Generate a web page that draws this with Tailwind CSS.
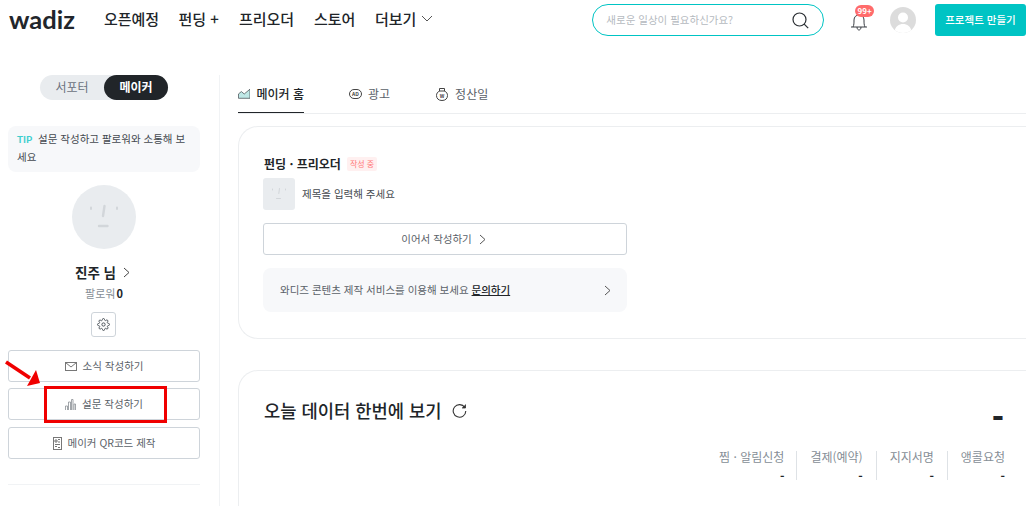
<!DOCTYPE html>
<html lang="ko">
<head>
    <meta charset="UTF-8">
    <meta name="viewport" content="width=device-width, initial-scale=1.0">
    <title>wadiz 메이커 홈</title>
    <script src="https://cdn.jsdelivr.net/npm/@tailwindcss/browser@4"></script>
</head>
<body class="relative h-[506px] w-[1026px] overflow-hidden bg-white font-['Noto_Sans_CJK_KR','Noto_Sans',sans-serif] text-[#212529]">
    <!-- Header -->
    <header class="flex h-[40px] items-start">
        <span class="ml-[9px] mt-[3px] w-[69px] font-['Lato',sans-serif] text-[25.5px] leading-[32px] font-bold text-[#22262b]">wadiz</span>
        <nav class="ml-[26px] mt-[6px] flex items-center whitespace-nowrap text-[15px] leading-[26px] font-medium">
            <span class="w-[74.5px]">오픈예정</span>
            <span class="w-[60.5px]">펀딩 +</span>
            <span class="w-[75px]">프리오더</span>
            <span class="w-[61px]">스토어</span>
            <span>더보기</span>
            <svg class="ml-[5px]" width="12" height="8" viewBox="0 0 12 8" fill="none" stroke="#555" stroke-width="1"><path d="M1 1l5 5 5-5"/></svg>
        </nav>
        <div class="ml-[159px] mt-[4px] flex h-[32px] w-[232px] items-center justify-between rounded-full border border-[#00c4c4] pl-[13px] pr-[14px]">
            <span class="text-[10.5px] text-[#b5bac0]">새로운 일상이 필요하신가요?</span>
            <svg width="17" height="17" viewBox="0 0 17 17" fill="none" stroke="#2a2e33" stroke-width="1.2"><circle cx="7.5" cy="7.5" r="6.5"/><path d="M12.2 12.2l4 4"/></svg>
        </div>
        <div class="relative ml-[26px] mt-[4px] h-[32px] w-[20px]">
            <svg class="absolute left-0 top-[8px]" width="18" height="19" viewBox="0 0 18 19" fill="none" stroke="#3a3e44" stroke-width="1"><path d="M1 15h16M3 15c1-2 1-4 1-7 0-3 2-5 5-5s5 2 5 5c0 3 0 5 1 7M7 15c0 2 1 3 2 3s2-1 2-3"/></svg>
            <span class="absolute left-[5px] top-[1px] h-[12px] w-[19px] rounded-full bg-[#ff6b6b] text-center text-[8px] leading-[12px] font-bold text-white">99+</span>
        </div>
        <div class="ml-[20px] mt-[7px] h-[26px] w-[26px] overflow-hidden rounded-full bg-[#dcdcdc]">
            <svg width="26" height="26" viewBox="0 0 26 26" fill="#fff"><circle cx="13" cy="10.5" r="5"/><path d="M4 26c1-7 5-9 9-9s8 2 9 9z"/></svg>
        </div>
        <a class="ml-[19px] mt-[4px] flex h-[32px] w-[91px] shrink-0 items-center justify-center rounded-[3px] bg-[#00c4c4] text-[10.5px] font-medium text-white">프로젝트 만들기</a>
    </header>

    <div class="flex">
        <!-- Sidebar -->
        <aside class="ml-[8px] flex w-[192px] shrink-0 flex-col pt-[35px]">
            <div class="mx-auto flex h-[25px] w-[128px] rounded-full bg-[#e9ecef] text-[12px] leading-[24px]">
                <span class="w-[64px] text-center text-[#6b7280]">서포터</span>
                <span class="w-[64px] rounded-full bg-[#212529] text-center font-bold text-white">메이커</span>
            </div>
            <p class="mt-[26px] h-[46px] break-all rounded-[8px] bg-[#f7f8fa] py-[4px] pl-[9px] pr-[9px] text-[10.5px] leading-[18px] text-[#44494f]"><span class="mr-[3px] font-['Lato',sans-serif] text-[10px] leading-none font-bold text-[#3ecfcf]">TIP</span> 설문 작성하고 팔로워와 소통해 보세요</p>
            <div class="mx-auto mt-[13px] h-[64px] w-[64px] rounded-full bg-[#e9ecef]">
                <svg width="64" height="64" viewBox="0 0 64 64" fill="none" stroke="#d2d6da" stroke-width="2" stroke-linecap="round"><path d="M19 22.5v1.5M45 22.5v1.5"/><path d="M32.5 21l-1.500 10" stroke-width="2.400"/><path d="M27 41h8.500" stroke-width="2.400"/></svg>
            </div>
            <div class="mt-[12px] flex items-center justify-center pr-[3px] text-[13.5px] leading-[22px] font-bold">진주 님
                <svg class="ml-[7px]" width="7" height="11" viewBox="0 0 7 11" fill="none" stroke="#444" stroke-width="1"><path d="M1 1l5 4.500-5 4.500"/></svg>
            </div>
            <p class="text-center text-[11px] leading-[20px] text-[#868e96]">팔로워 <span class="-ml-[2px] font-bold text-[#212529]">0</span></p>
            <button class="ml-[83px] mt-[9px] flex h-[25px] w-[25px] items-center justify-center rounded-[3px] border border-[#ced4da]">
                <svg width="13" height="13" viewBox="0 0 24 24" fill="none" stroke="#495057" stroke-width="1.800"><circle cx="12" cy="12" r="3"/><path d="M19.400 15a1.650 1.650 0 0 0 .33 1.820l.06.06a2 2 0 1 1-2.830 2.830l-.06-.06a1.650 1.650 0 0 0-2.820 1.170V21a2 2 0 1 1-4 0v-.09a1.650 1.650 0 0 0-2.820-1.170l-.06.06a2 2 0 1 1-2.830-2.830l.06-.06a1.650 1.650 0 0 0-1.170-2.820H3a2 2 0 1 1 0-4h.09a1.650 1.650 0 0 0 1.170-2.820l-.06-.06a2 2 0 1 1 2.830-2.830l.06.06a1.650 1.650 0 0 0 2.820-1.170V3a2 2 0 1 1 4 0v.09a1.650 1.650 0 0 0 2.820 1.170l.06-.06a2 2 0 1 1 2.830 2.830l-.06.06a1.650 1.650 0 0 0 1.170 2.820H21a2 2 0 1 1 0 4h-.09a1.650 1.650 0 0 0-1.510 1.090z"/></svg>
            </button>
            <div class="mt-[13px] flex flex-col gap-[6px] text-[10.5px] text-[#5a6168]">
                <button class="flex h-[32px] items-center justify-center gap-[6px] rounded-[3px] border border-[#ced4da]">
                    <svg width="12" height="9" viewBox="0 0 12 9" fill="none" stroke="#777" stroke-width="1"><rect x=".5" y=".5" width="11" height="8"/><path d="M.5 .5L6 5l5.500-4.500"/></svg>소식 작성하기
                </button>
                <button class="flex h-[32px] items-center justify-center gap-[6px] rounded-[3px] border border-[#ced4da]">
                    <svg width="11" height="11" viewBox="0 0 11 11" fill="none" stroke="#8a8f94" stroke-width=".8"><path d="M.5 11V7h2v4M3.500 11V3h2v8M6.500 11V.5h1.500V11M9 11V5h1.500v6"/></svg>설문 작성하기
                </button>
                <button class="mt-[1px] flex h-[32px] items-center justify-center gap-[6px] rounded-[3px] border border-[#ced4da]">
                    <svg width="9" height="13" viewBox="0 0 9 13" fill="none" stroke="#777"><rect x=".5" y=".5" width="8" height="12"/><path d="M2 3h2v2H2zM5 2.500h2M5 5h2M2 7.500h5M2 9.500h2M5 10.500h2" stroke-width="1"/></svg>메이커 QR코드 제작
                </button>
            </div>
            <div class="mt-[25px] h-px bg-[#f1f3f5]"></div>
        </aside>

        <div class="ml-[19px] mt-[35px] h-[431px] w-px bg-[#f1f3f5]"></div>

        <!-- Main -->
        <main class="ml-[18px] mt-[35px] w-[788px] shrink-0">
            <nav class="flex h-[39px] border-b border-[#eceef0] whitespace-nowrap text-[12px] leading-[36px]">
                <a class="flex h-[38px] w-[66px] items-center gap-[6px] border-b border-[#212529] font-medium">
                    <svg width="13" height="11" viewBox="0 0 13 11" fill="none"><path d="M.5 10.500V6l3-2.500L6.500 6l6-5v9.500z" fill="#bfe8e6" stroke="#4b5258" stroke-width=".8"/></svg>메이커 홈
                </a>
                <a class="ml-[45px] flex h-[38px] items-center gap-[6px] text-[#5a6168]">
                    <svg width="13" height="10" viewBox="0 0 13 10"><rect x=".5" y=".5" width="12" height="9" rx="4.500" fill="none" stroke="#444"/><text x="6.500" y="7" font-size="5" font-weight="700" text-anchor="middle" fill="#444">AD</text></svg>광고
                </a>
                <a class="ml-[46px] flex h-[38px] items-center gap-[7px] text-[#5a6168]">
                    <svg width="12" height="13" viewBox="0 0 12 13"><path d="M3.500 .5h5v2.500c2 1 3 2.500 3 4.500 0 3-2 5-5.500 5S.5 10.500 .5 7.500c0-2 1-3.500 3-4.500z" fill="none" stroke="#444"/><path d="M3 3h6" stroke="#444"/><text x="6" y="9.500" font-size="5" font-weight="700" text-anchor="middle" fill="#444">W</text></svg>정산일
                </a>
            </nav>

            <section class="mt-[12px] h-[213px] rounded-l-[20px] border border-r-0 border-[#eceef0] pl-[24px] pt-[28px]">
                <div class="flex h-[18px] items-center">
                    <h2 class="pl-px text-[12px] font-bold">펀딩 · 프리오더</h2>
                    <span class="ml-[6px] h-[14px] rounded-[2px] bg-[#fff0f0] px-[3px] text-[8px] leading-[14px] text-[#ff7a7a]">작성 중</span>
                </div>
                <div class="mt-[5px] flex items-center gap-[7px]">
                    <div class="h-[32px] w-[32px] rounded-[3px] bg-[#e9ecef]">
                        <svg width="32" height="32" viewBox="0 0 32 32" fill="none" stroke="#d2d6da" stroke-linecap="round"><path d="M9.500 11v1M22.500 11v1M16.500 10.500l-.7 5M13.500 20.500h4"/></svg>
                    </div>
                    <span class="text-[10.5px] text-[#44494f]">제목을 입력해 주세요</span>
                </div>
                <button class="mt-[13px] flex h-[32px] w-[364px] items-center justify-center gap-[7px] rounded-[3px] border border-[#ced4da] pr-[3px] text-[10.5px] text-[#5a6168]">이어서 작성하기
                    <svg width="7" height="11" viewBox="0 0 7 11" fill="none" stroke="#555"><path d="M1 1l5 4.500-5 4.500"/></svg>
                </button>
                <div class="mt-[13px] flex h-[44px] w-[364px] items-center justify-between rounded-[8px] bg-[#f7f8fa] pl-[17px] pr-[16px] text-[10.5px] text-[#5a6168]">
                    <span>와디즈 콘텐츠 제작 서비스를 이용해 보세요 <a class="font-medium text-[#212529] underline">문의하기</a></span>
                    <svg width="7" height="11" viewBox="0 0 7 11" fill="none" stroke="#555"><path d="M1 1l5 4.500-5 4.500"/></svg>
                </div>
            </section>

            <section class="mt-[31px] h-[136px] rounded-tl-[20px] border border-r-0 border-b-0 border-[#eceef0] pl-[25px] pt-[26px]">
                <div class="flex h-[26px] w-[740px] items-center">
                    <h2 class="text-[17.7px] font-medium leading-[26px]">오늘 데이터 한번에 보기</h2>
                    <svg class="ml-[10px]" width="15" height="15" viewBox="0 0 15 15" fill="none" stroke="#333" stroke-width="1.100"><path d="M12.800 4.500A6.300 6.300 0 1 0 13.800 8"/><path d="M13.500 1.500v3.500H10" fill="#333" stroke-width=".8"/></svg>
                    <span class="mb-[-12px] ml-auto text-[32px] leading-[40px] font-black">-</span>
                </div>
                <div class="mt-[28px] flex w-[741px] justify-end text-[12px] leading-[19px] text-[#868e96]">
                    <div class="h-[29px] border-r border-[#dee2e6] pr-[12px] text-right"><div class="-mt-[4px]">찜 · 알림신청<p class="font-bold text-[#212529]">-</p></div></div>
                    <div class="h-[29px] border-r border-[#dee2e6] px-[13px] text-right"><div class="-mt-[4px]">결제(예약)<p class="font-bold text-[#212529]">-</p></div></div>
                    <div class="h-[29px] border-r border-[#dee2e6] px-[13px] text-right"><div class="-mt-[4px]">지지서명<p class="font-bold text-[#212529]">-</p></div></div>
                    <div class="h-[29px] pl-[13px] text-right"><div class="-mt-[4px]">앵콜요청<p class="font-bold text-[#212529]">-</p></div></div>
                </div>
            </section>
        </main>
    </div>

    <!-- Annotation overlay -->
    <div class="absolute left-[44px] top-[386px] h-[37px] w-[123px] border-[3px] border-[#f00000]"></div>
    <svg class="absolute left-[4px] top-[358px]" width="40" height="32" viewBox="0 0 40 32"><path d="M2 4l24 16" stroke="#f00000" stroke-width="3.500"/><path d="M23 28l13-3-4-13z" fill="#f00000"/></svg>
</body>
</html>
